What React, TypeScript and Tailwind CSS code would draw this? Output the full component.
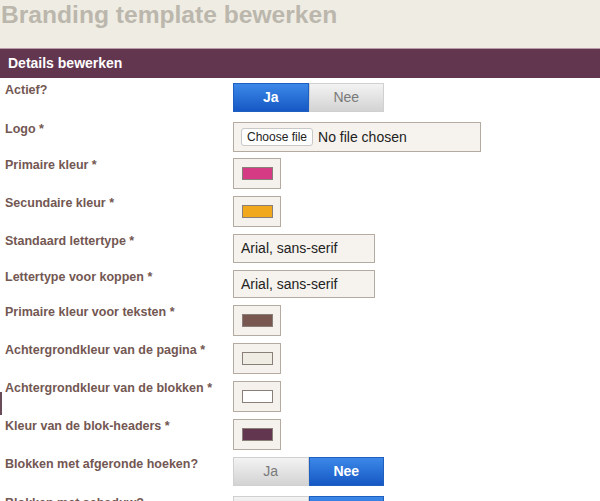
import React from "react";

type Row =
  | { kind: "toggle"; label: string; on: boolean; h: string }
  | { kind: "file"; label: string; h: string }
  | { kind: "swatch"; label: string; color: string; h: string }
  | { kind: "text"; label: string; value: string; h: string; boxH: string };

const rows: Row[] = [
  { kind: "toggle", label: "Actief?", on: true, h: "h-[39px]" },
  { kind: "file", label: "Logo *", h: "h-[36px]" },
  { kind: "swatch", label: "Primaire kleur *", color: "bg-[#d53a85]", h: "h-[38px]" },
  { kind: "swatch", label: "Secundaire kleur *", color: "bg-[#f1a81d]", h: "h-[38px]" },
  { kind: "text", label: "Standaard lettertype *", value: "Arial, sans-serif", h: "h-[36px]", boxH: "h-[29px]" },
  { kind: "text", label: "Lettertype voor koppen *", value: "Arial, sans-serif", h: "h-[35px]", boxH: "h-[28px]" },
  { kind: "swatch", label: "Primaire kleur voor teksten *", color: "bg-[#77574f]", h: "h-[38px]" },
  { kind: "swatch", label: "Achtergrondkleur van de pagina *", color: "bg-[#efece3]", h: "h-[38px]" },
  { kind: "swatch", label: "Achtergrondkleur van de blokken *", color: "bg-white", h: "h-[38px]" },
  { kind: "swatch", label: "Kleur van de blok-headers *", color: "bg-[#633650]", h: "h-[38px]" },
  { kind: "toggle", label: "Blokken met afgeronde hoeken?", on: false, h: "h-[39px]" },
  { kind: "toggle", label: "Blokken met schaduw?", on: false, h: "h-[39px]" },
];

const activeCls =
  "bg-gradient-to-b from-[#3c88e8] to-[#1658c4] text-white font-bold border border-[#1f5fc0]";
const idleCls =
  "bg-gradient-to-b from-[#f3f3f3] to-[#d3d3d3] text-[#7a7a7a] border border-[#d0d0d0]";

function Toggle({ on }: { on: boolean }) {
  return (
    <div className="flex w-[151px] h-[29px] text-[14px]">
      <div className={`flex-1 flex items-center justify-center ${on ? activeCls : idleCls}`}>Ja</div>
      <div className={`flex-1 flex items-center justify-center ${on ? idleCls : activeCls}`}>Nee</div>
    </div>
  );
}

function Control({ row }: { row: Row }) {
  if (row.kind === "toggle") return <Toggle on={row.on} />;
  if (row.kind === "file")
    return (
      <div className="flex items-center w-[248px] h-[30px] bg-[#f6f2ee] border border-[#b3aaa1] pl-[7px] gap-[5px]">
        <span className="bg-white border border-[#c8c8c8] rounded-[3px] text-[12px] leading-[14px] px-[5px] py-[1px] text-[#222]">
          Choose file
        </span>
        <span className="text-[14px] text-[#222]">No file chosen</span>
      </div>
    );
  if (row.kind === "swatch")
    return (
      <div className="flex items-center justify-center w-[48px] h-[31px] bg-[#f5f1ed] border border-[#b3aaa1]">
        <div className={`w-[31px] h-[13px] border border-[#8a7f78] ${row.color}`} />
      </div>
    );
  return (
    <div className={`flex items-center w-[142px] ${row.boxH} bg-[#f6f2ee] border border-[#b3aaa1] pl-[7px] text-[14px] text-[#222]`}>
      {row.value}
    </div>
  );
}

export default function App() {
  return (
    <div className="relative w-[600px] h-[501px] overflow-hidden bg-white font-['Liberation_Sans',Arial,sans-serif]">
      <div className="h-[48px] bg-[#efece3] pt-[1px]">
        <h1 className="text-[24.6px] leading-[28px] font-bold text-[#bbb7ad] pl-[1px]">
          Branding template bewerken
        </h1>
      </div>
      <div className="h-[30px] bg-[#633650] border-t border-[#b89aa8] flex items-center pl-[8px] text-white font-bold text-[14px]">
        Details bewerken
      </div>
      <div className="flex flex-col pt-[5px]">
        {rows.map((row) => (
          <div key={row.label} className={`flex items-start ${row.h}`}>
            <div className="w-[233px] pl-[5px] text-[12.5px] leading-[15px] font-bold text-[#735752]">
              {row.label}
            </div>
            <Control row={row} />
          </div>
        ))}
      </div>
      <div className="absolute left-0 top-[392px] w-[2px] h-[23px] bg-[#6a4b58]" />
    </div>
  );
}
